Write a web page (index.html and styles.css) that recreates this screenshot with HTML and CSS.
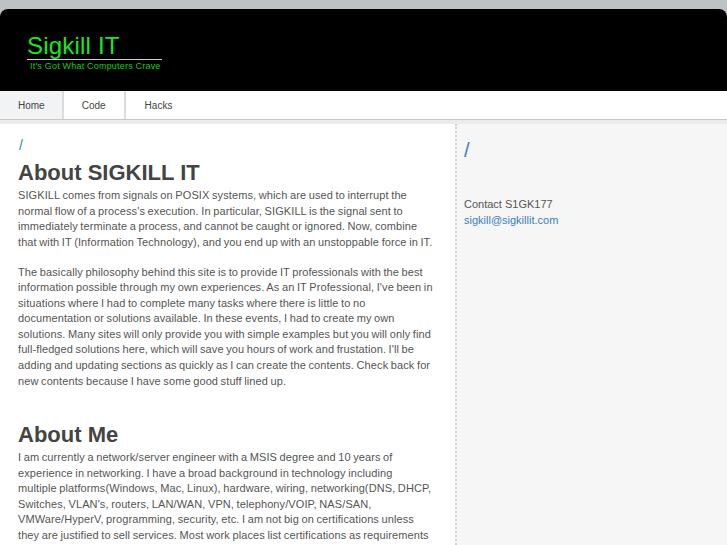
FILE: index.html
```html
<!DOCTYPE html>
<html>
<head>
<meta charset="utf-8">
<link rel="stylesheet" href="styles.css">
</head>
<body>
<div class="page">
  <header class="masthead">
    <div class="brand">
      <h1 class="brand-title">Sigkill IT</h1>
    </div>
    <div class="brand-tag">It's Got What Computers Crave</div>
  </header>
  <nav class="menu">
    <a class="menu-item active" href="#">Home</a>
    <a class="menu-item" href="#">Code</a>
    <a class="menu-item last" href="#">Hacks</a>
  </nav>
  <div class="content">
    <main class="main">
      <a class="crumb" href="#">/</a>
      <h2 class="title">About SIGKILL IT</h2>
      <p>SIGKILL comes from signals on POSIX systems, which are used to interrupt the normal flow of a process's execution. In particular, SIGKILL is the signal sent to immediately terminate a process, and cannot be caught or ignored. Now, combine that with IT (Information Technology), and you end up with an unstoppable force in IT.</p>
      <p>The basically philosophy behind this site is to provide IT professionals with the best information possible through my own experiences. As an IT Professional, I've been in situations where I had to complete many tasks where there is little to no documentation or solutions available. In these events, I had to create my own solutions. Many sites will only provide you with simple examples but you will only find full-fledged solutions here, which will save you hours of work and frustation. I'll be adding and updating sections as quickly as I can create the contents. Check back for new contents because I have some good stuff lined up.</p>
      <h2 class="title second">About Me</h2>
      <p>I am currently a network/server engineer with a MSIS degree and 10 years of experience in networking. I have a broad background in technology including<br>multiple platforms(Windows, Mac, Linux), hardware, wiring, networking(DNS, DHCP, Switches, VLAN's, routers, LAN/WAN, VPN, telephony/VOIP, NAS/SAN, VMWare/HyperV, programming, security, etc. I am not big on certifications unless they are justified to sell services. Most work places list certifications as requirements but I believe experience and knowledge matter more than a piece of paper.</p>
    </main>
    <aside class="side">
      <a class="side-crumb" href="#">/</a>
      <div class="contact">
        <div>Contact S1GK177</div>
        <a href="#">sigkill@sigkillit.com</a>
      </div>
    </aside>
  </div>
</div>
</body>
</html>
```

FILE: styles.css
```css
html, body {
  margin: 0;
  padding: 0;
}
body {
  background: #bdc3c5;
  font-family: "Liberation Sans", Arial, sans-serif;
  overflow: hidden;
}
.page {
  margin-top: 9px;
}
.masthead {
  background: #000;
  border-radius: 8px 8px 0 0;
  height: 82px;
  box-sizing: border-box;
  padding: 24px 0 0 27px;
}
.brand {
  width: 135px;
  border-bottom: 1px solid #d0d0d0;
}
.brand-title {
  margin: 0;
  font-size: 24px;
  font-weight: normal;
  line-height: 26px;
  color: #1ee51e;
  letter-spacing: 0.2px;
}
.brand-tag {
  font-size: 9px;
  line-height: 12px;
  color: #18cc18;
  padding-left: 3px;
  letter-spacing: 0.2px;
}
.menu {
  display: flex;
  background: #fff;
  height: 28px;
  border-bottom: 1px solid #c8c8c8;
}
.menu-item {
  display: flex;
  align-items: center;
  padding: 0 18px;
  font-size: 10px;
  color: #444;
  text-decoration: none;
  border-right: 2px solid #dcdcdc;
}
.menu-item.active {
  background: #f2f3f5;
  padding-right: 17px;
}
.menu-item.last {
  border-right: none;
  padding-left: 19px;
}
.content {
  display: flex;
  border-top: 4px solid #ebebeb;
  min-height: 430px;
}
.main {
  width: 455px;
  box-sizing: border-box;
  padding: 13px 18px 0 18px;
  background: #fff;
  color: #555;
  font-size: 11px;
  line-height: 15.55px;
  letter-spacing: 0.1px;
  word-spacing: -0.6px;
}
.main p {
  margin: 0 0 14.5px;
}
.crumb {
  display: block;
  color: #3a7dbf;
  text-decoration: none;
  font-size: 14px;
  line-height: 16px;
  margin-left: 1px;
}
.title {
  margin: 4px 0 0;
  font-size: 22px;
  line-height: 31px;
  color: #444;
  font-weight: bold;
  letter-spacing: 0;
  word-spacing: 0;
}
.title.second {
  margin-top: 30px;
}
.side {
  flex: 1;
  background: #f6f6f6;
  border-left: 2px dotted #d2d2d2;
  padding: 15px 8px 0 7px;
  font-size: 11px;
  line-height: 16px;
  color: #555;
}
.side-crumb {
  display: block;
  color: #3a7dbf;
  text-decoration: none;
  font-size: 20px;
  line-height: 22px;
}
.contact {
  margin-top: 35px;
}
.contact a {
  color: #3a7dbf;
  text-decoration: none;
}
```
